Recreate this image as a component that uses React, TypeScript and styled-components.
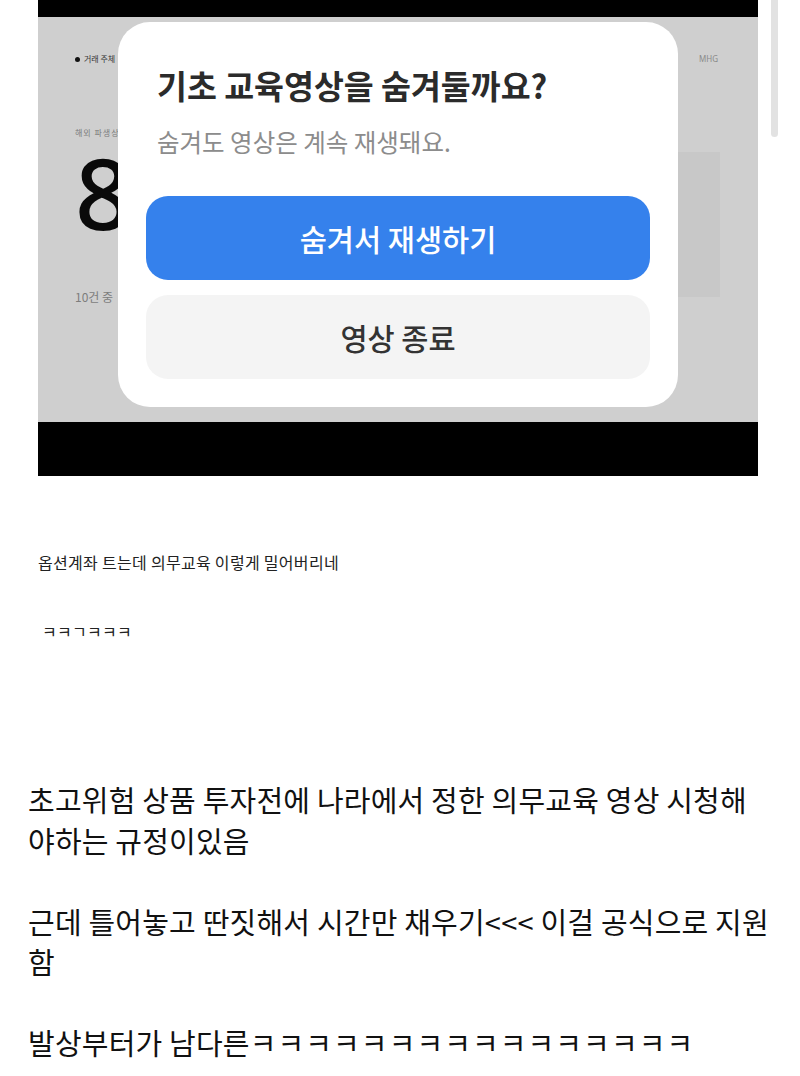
import React, { FC } from 'react';
import styled, { createGlobalStyle } from 'styled-components';

const GlobalStyle = createGlobalStyle`
  html, body {
    margin: 0;
    padding: 0;
    background: #fff;
  }
  body {
    font-family: "Noto Sans CJK KR", "Noto Sans", sans-serif;
    color: #111;
  }
`;

const Page = styled.div`
  position: relative;
  padding-bottom: 20px;
`;

const ScrollThumb = styled.div`
  position: fixed;
  top: 0;
  right: 22px;
  width: 7px;
  height: 137px;
  background: #e2e2e2;
  border-radius: 0 0 4px 4px;
`;

const VideoFrame = styled.div`
  margin-left: 38px;
  width: 720px;
  background: #000;
  padding: 17px 0 54px;
`;

const Screen = styled.div`
  position: relative;
  height: 405px;
  box-sizing: border-box;
  padding: 36px 38px 0 37px;
  background: #cfcfcf;
  overflow: hidden;
`;

const TopRow = styled.div`
  display: flex;
  justify-content: space-between;
  align-items: center;
  height: 12px;
  font-size: 8px;
  line-height: 12px;
`;

const Tag = styled.span`
  display: flex;
  align-items: center;
  gap: 4px;
  color: #333;
  &::before {
    content: '';
    width: 5px;
    height: 5px;
    border-radius: 50%;
    background: #111;
  }
`;

const Mark = styled.span`
  color: #8a8a8a;
  font-family: "Noto Sans", sans-serif;
  margin-right: 2px;
`;

const Body = styled.div`
  display: flex;
  align-items: flex-start;
  justify-content: space-between;
  margin-top: 62px;
`;

/* the left column is cut off where the modal starts */
const Stats = styled.div`
  width: 43px;
  overflow: hidden;
  white-space: nowrap;
  display: flex;
  flex-direction: column;
  align-items: flex-start;
`;

const Caption = styled.div`
  font-size: 8px;
  line-height: 12px;
  color: #7a7a7a;
  letter-spacing: 1px;
`;

const BigNumber = styled.div`
  margin-top: 4px;
  font-family: "Noto Sans", sans-serif;
  font-size: 98px;
  font-weight: 500;
  line-height: 1;
  color: #0a0a0a;
`;

const Count = styled.div`
  margin-top: 48px;
  font-size: 12px;
  line-height: 16px;
  color: #7d7d7d;
`;

const SidePanel = styled.div`
  margin-top: 25px;
  width: 300px;
  height: 145px;
  background: #c8c8c8;
`;

const Dialog = styled.div`
  position: absolute;
  top: 5px;
  left: 80px;
  width: 560px;
  box-sizing: border-box;
  padding: 43px 28px 28px;
  background: #fff;
  border-radius: 32px;
  display: flex;
  flex-direction: column;
`;

const DialogTitle = styled.h2`
  margin: 0 0 0 11px;
  font-size: 32.5px;
  line-height: 40px;
  font-weight: 700;
  color: #2b2b2b;
`;

const DialogText = styled.p`
  margin: 20px 0 0 11px;
  font-size: 24.5px;
  line-height: 34px;
  color: #8c8c8c;
`;

const Actions = styled.div`
  margin-top: 37px;
  display: flex;
  flex-direction: column;
  gap: 15px;
`;

const ActionButton = styled.button<{ $primary?: boolean }>`
  height: 84px;
  border: 0;
  border-radius: 22px;
  font-family: inherit;
  font-size: 29.5px;
  font-weight: 500;
  background: ${({ $primary }) => ($primary ? '#3581ec' : '#f4f4f4')};
  color: ${({ $primary }) => ($primary ? '#fff' : '#333')};
  cursor: pointer;
`;

const Note = styled.p<{ $gap: number; $indent?: number }>`
  margin: ${({ $gap }) => $gap}px 0 0 ${({ $indent = 38 }) => $indent}px;
  font-size: 16px;
  line-height: 22px;
  letter-spacing: 0.3px;
  color: #222;
`;

const Post = styled.div`
  margin-top: 137px;
  padding: 0 29px 0 28px;
  font-size: 29px;
  line-height: 40.5px;
  letter-spacing: 0.2px;
  color: #111;
`;

const Para = styled.p`
  margin: 0 0 40.5px;
  &:last-child {
    margin-bottom: 0;
  }
`;

const Laugh = styled.span`
  letter-spacing: 1.1px;
`;

const App: FC = () => (
  <Page>
    <GlobalStyle />
    <ScrollThumb />
    <VideoFrame>
      <Screen>
        <TopRow>
          <Tag>거래 주체</Tag>
          <Mark>MHG</Mark>
        </TopRow>
        <Body>
          <Stats>
            <Caption>해외 파생상품</Caption>
            <BigNumber>8</BigNumber>
            <Count>10건 중</Count>
          </Stats>
          <SidePanel />
        </Body>
        <Dialog>
          <DialogTitle>기초 교육영상을 숨겨둘까요?</DialogTitle>
          <DialogText>숨겨도 영상은 계속 재생돼요.</DialogText>
          <Actions>
            <ActionButton $primary>숨겨서 재생하기</ActionButton>
            <ActionButton>영상 종료</ActionButton>
          </Actions>
        </Dialog>
      </Screen>
    </VideoFrame>
    <Note $gap={75}>옵션계좌 트는데 의무교육 이렇게 밀어버리네</Note>
    <Note $gap={47} $indent={42}>ㅋㅋㄱㅋㅋㅋ</Note>
    <Post>
      <Para>초고위험 상품 투자전에 나라에서 정한 의무교육 영상 시청해야하는 규정이있음</Para>
      <Para>근데 틀어놓고 딴짓해서 시간만 채우기&lt;&lt;&lt; 이걸 공식으로 지원함</Para>
      <Para>
        발상부터가 남다른<Laugh>ㅋㅋㅋㅋㅋㅋㅋㅋㅋㅋㅋㅋㅋㅋㅋㅋ</Laugh>
      </Para>
    </Post>
  </Page>
);

export default App;
